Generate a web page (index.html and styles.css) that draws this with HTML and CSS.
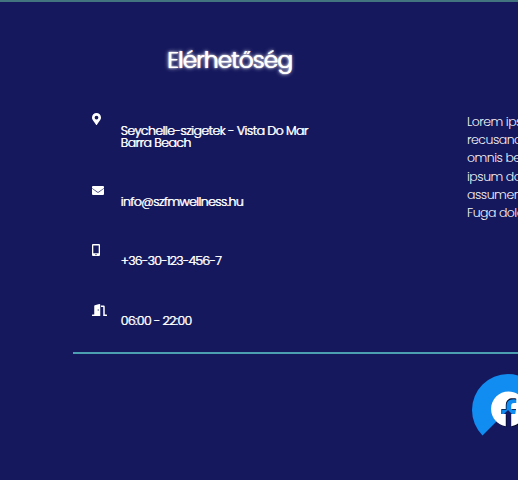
FILE: index.html
```html
<!DOCTYPE html>
<html lang="hu">
<head>
<meta charset="utf-8">
<title>Elérhetőség</title>
<link rel="stylesheet" href="styles.css">
</head>
<body>
<footer class="footer">
  <div class="columns">
    <section class="contact">
      <h2>Elérhetőség</h2>
      <ul>
        <li class="address">
          <svg class="icon pin" viewBox="0 0 384 512"><path d="M172 502C27 291 0 270 0 192a192 192 0 0 1 384 0c0 78-27 99-172 310a24 24 0 0 1-40 0zM192 272a80 80 0 1 0 0-160 80 80 0 0 0 0 160z"/></svg>
          <p><span class="street">Seychelle-szigetek - Vista Do Mar</span><br><span class="town">Barra Beach</span></p>
        </li>
        <li class="mail">
          <svg class="icon envelope" viewBox="0 0 12 9"><path d="M1 0h10a1 1 0 0 1 1 1v.9L7 5.6q-1 .7-2 0L0 1.9V1a1 1 0 0 1 1-1zM0 2.6l4.6 3.4q1.4 1 2.8 0L12 2.6V8a1 1 0 0 1-1 1H1a1 1 0 0 1-1-1z"/></svg>
          <p>info@szfmwellness.hu</p>
        </li>
        <li class="phone">
          <svg class="icon mobile" viewBox="0 0 8 12"><path fill-rule="evenodd" d="M1 0h6a1 1 0 0 1 1 1v10a1 1 0 0 1-1 1H1a1 1 0 0 1-1-1V1a1 1 0 0 1 1-1zM1.3 1.4v7.8h5.4V1.4zM4 9.9a.7.7 0 1 0 0 1.4.7.7 0 0 0 0-1.4z"/></svg>
          <p>+36-30-123-456-7</p>
        </li>
        <li class="hours">
          <svg class="icon door" viewBox="0 0 640 512"><path fill-rule="evenodd" d="M624 448h-80V113c0-27-22-49-48-49H384v64h96v384h144a16 16 0 0 0 16-16v-32a16 16 0 0 0-16-16zM312 1 120 51c-14 4-24 17-24 31v366H16a16 16 0 0 0-16 16v32a16 16 0 0 0 16 16h336V33c0-22-20-37-40-32zM264 288c-13 0-24-14-24-32s11-32 24-32 24 14 24 32-11 32-24 32z"/></svg>
          <p>06:00 - 22:00</p>
        </li>
      </ul>
    </section>
    <p class="about">Lorem ipsum<br>recusandae<br>omnis beatae<br>ipsum dolor<br>assumenda<br>Fuga dolorem</p>
  </div>
  <div class="social">
    <a class="facebook" href="#" aria-label="Facebook">
      <svg viewBox="0 0 72 72">
        <path class="disc" d="M36 36 10.5 61.5A36 36 0 1 1 61.5 61.5z"/>
        <svg class="logo" x="18.5" y="17" width="36" height="36" viewBox="0 0 512 512" overflow="visible"><path class="logo-shadow" transform="translate(10 12)" d="M504 256C504 119 393 8 256 8S8 119 8 256c0 123.78 90.69 226.38 209.25 245V327.69h-63V256h63v-54.64c0-62.15 37-96.48 93.67-96.48 27.14 0 55.52 4.84 55.52 4.84v61h-31.28c-30.8 0-40.41 19.12-40.41 38.73V256h68.78l-11 71.69h-57.78V501C413.31 482.38 504 379.78 504 256z"/><path d="M504 256C504 119 393 8 256 8S8 119 8 256c0 123.78 90.69 226.38 209.25 245V327.69h-63V256h63v-54.64c0-62.15 37-96.48 93.67-96.48 27.14 0 55.52 4.84 55.52 4.84v61h-31.28c-30.8 0-40.41 19.12-40.41 38.73V256h68.78l-11 71.69h-57.78V501C413.31 482.38 504 379.78 504 256z"/></svg>
      </svg>
    </a>
  </div>
</footer>
</body>
</html>
```
FILE: styles.css
```css
* { box-sizing: border-box; }
body {
  margin: 0;
  overflow: hidden;
  background: #15185d;
  color: #fff;
  font-family: Poppins, Inter, "Liberation Sans", sans-serif;
}
.footer {
  height: 480px;
  border-top: 2px solid #41747f;
  overflow: hidden;
}
.columns {
  display: flex;
  width: 620px;
  height: 352px;
  margin-left: 73px;
  border-bottom: 2px solid #4c9fb1;
}
.contact { flex: 0 0 394px; padding: 41px 0 0 19px; }
h2 {
  margin: 0 0 0 75px;
  height: 69px;
  font-size: 23px;
  line-height: 34px;
  font-weight: 300;
  letter-spacing: -0.72px;
  text-shadow: 0.8px 0 0 #fff, 0 0 4px #fff, 0 0 2px #fff;
}
ul { margin: 0; padding: 0; list-style: none; }
li { display: flex; height: 60px; font-size: 12.5px; line-height: 12px; }
li.address { height: 71px; }
li p {
  margin: 13px 0 0 -0.5px;
  white-space: nowrap;
  font-weight: 300;
  text-shadow: 0.6px 0 0 #fff;
}
.icon { fill: #fff; flex: none; }
.pin { width: 9px; height: 12px; margin: 1px 20px 0 0; }
.envelope { width: 12px; height: 9px; margin: 3px 17px 0 0; }
.mobile { width: 8px; height: 12px; margin: 1px 21px 0 0; }
.door { width: 15px; height: 12px; margin: 1px 14px 0 0; }
.street { letter-spacing: -0.55px; }
.town { letter-spacing: -0.55px; }
.mail p { letter-spacing: -0.6px; }
.phone p { letter-spacing: -0.75px; }
.hours p, .phone p { margin-top: 12px; }
.hours p { letter-spacing: -0.6px; }
.about {
  margin: 111px 0 0 0;
  white-space: nowrap;
  font-size: 12.5px;
  line-height: 18.2px;
  font-weight: 300;
  letter-spacing: -0.5px;
  color: #f4f4f8;
}
.social { padding: 20px 0 0 472px; }
.facebook { display: block; width: 72px; height: 72px; }
.facebook > svg { display: block; width: 72px; height: 72px; }
.disc { fill: #118cf0; }
.logo { fill: #fff; }
.logo-shadow { fill: #050b2c; }
```
